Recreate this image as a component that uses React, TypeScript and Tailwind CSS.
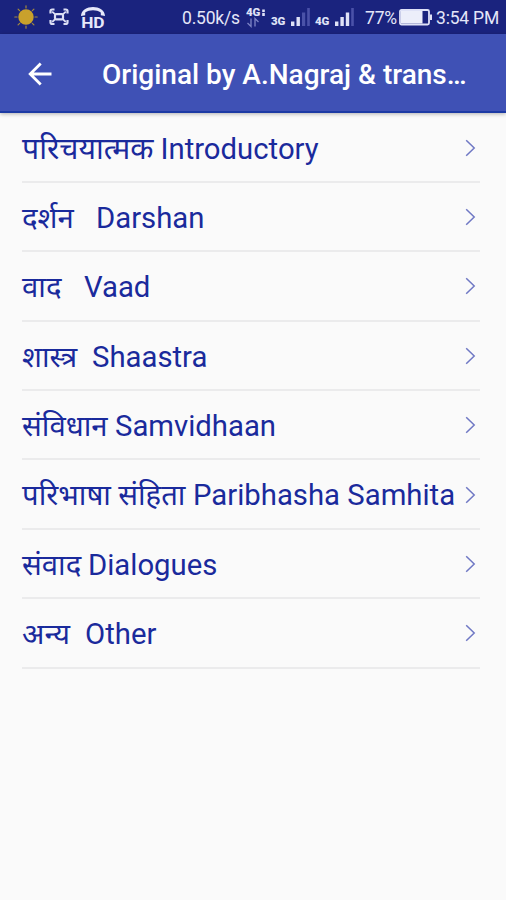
import React from 'react';

interface Topic {
  hindi: string;
  english: string;
  // size of the Hindi part, its width includes the gap after it
  hindiClass: string;
}

const topics: Topic[] = [
  { hindi: 'परिचयात्मक', english: 'Introductory', hindiClass: 'w-[138.5px] text-[30.2px]' },
  { hindi: 'दर्शन', english: 'Darshan', hindiClass: 'w-[74px]' },
  { hindi: 'वाद', english: 'Vaad', hindiClass: 'w-[62px]' },
  { hindi: 'शास्त्र', english: 'Shaastra', hindiClass: 'w-[70px]' },
  { hindi: 'संविधान', english: 'Samvidhaan', hindiClass: 'w-[93px]' },
  { hindi: 'परिभाषा संहिता', english: 'Paribhasha Samhita', hindiClass: 'w-[171px]' },
  { hindi: 'संवाद', english: 'Dialogues', hindiClass: 'w-[66px]' },
  { hindi: 'अन्य', english: 'Other', hindiClass: 'w-[63px]' },
];

const SunIcon = () => (
  <svg width="26" height="26" viewBox="0 0 26 26" className="shrink-0">
    <g stroke="#a3893f" strokeWidth="1.2" strokeLinecap="round">
      {[0, 45, 90, 135, 180, 225, 270, 315].map((angle) => (
        <line key={angle} x1="13" y1="1.8" x2="13" y2="4" transform={`rotate(${angle} 13 13)`} />
      ))}
    </g>
    <circle cx="13" cy="13" r="7.7" fill="#c9a12c" />
  </svg>
);

const ScanIcon = () => (
  <svg width="20" height="18" viewBox="0 0 20 18" fill="none" stroke="#dcdff5" strokeWidth="2.2" className="shrink-0">
    <path d="M1.5 5.5V3.2Q1.5 1.5 3.2 1.5H5.5M14.5 1.5H16.8Q18.5 1.5 18.5 3.2V5.5M18.5 12V14.3Q18.5 16 16.8 16H14.5M5.5 16H3.2Q1.5 16 1.5 14.3V12" />
    <rect x="6" y="6.2" width="8" height="5.2" rx="1.2" />
    <path d="M3.2 3.6L6.2 6.4M16.8 3.6L13.8 6.4M3.2 14L6.2 11.2M16.8 14L13.8 11.2" strokeWidth="1.8" />
  </svg>
);

const HdCallIcon = () => (
  <svg width="26" height="28" viewBox="0 0 26 28" className="shrink-0">
    <path d="M1 13C1.4 0.9 24.6 0.9 25 13L20.8 12.2V9.4C16.5 6.4 9.5 6.4 5.2 9.4V12.2Z" fill="#e6e8fa" />
    <text x="1.2" y="25" fontSize="15.5" fontWeight="700" fill="#e6e8fa" textLength="23" lengthAdjust="spacingAndGlyphs">
      HD
    </text>
  </svg>
);

const MobileSignals = () => (
  <svg width="112" height="34" viewBox="0 0 112 34" fill="#dfe2f7" fontWeight="900" className="shrink-0">
    <text x="0" y="16.2" fontSize="10.5" textLength="14" lengthAdjust="spacingAndGlyphs">4G</text>
    <rect x="16.2" y="9.5" width="2.6" height="2.6" />
    <rect x="16.2" y="13" width="2.6" height="3" />
    <path d="M5 18.5V26.5L1.5 23M9 26.5V18.5L12.5 22" fill="none" stroke="#7d84c6" strokeWidth="1.3" />
    <text x="25" y="24.8" fontSize="10" textLength="14" lengthAdjust="spacingAndGlyphs">3G</text>
    <rect x="45" y="21.5" width="3.4" height="4.5" />
    <rect x="50.5" y="17" width="3.4" height="9" />
    <rect x="56" y="12.5" width="3.2" height="13.5" fill="#4a52a8" />
    <rect x="61.2" y="8" width="2.6" height="18" fill="#4a52a8" />
    <text x="69" y="24.8" fontSize="10" textLength="14" lengthAdjust="spacingAndGlyphs">4G</text>
    <rect x="89" y="21.5" width="3.4" height="4.5" />
    <rect x="94.4" y="17" width="3.4" height="9" />
    <rect x="99.8" y="12.5" width="3.4" height="13.5" />
    <rect x="105.2" y="8" width="2.6" height="18" fill="#4a52a8" />
  </svg>
);

const BatteryIcon = () => (
  <svg width="34" height="17" viewBox="0 0 34 17" className="shrink-0">
    <rect x="1" y="1" width="29" height="14.5" rx="1.5" fill="none" stroke="#dfe2f7" strokeWidth="1.8" />
    <rect x="2" y="2" width="21.5" height="12.5" fill="#eceefa" />
    <rect x="31" y="5.5" width="2" height="5.5" fill="#dfe2f7" />
  </svg>
);

const StatusBar = () => (
  <div className="flex h-[34px] shrink-0 items-center bg-[#1a237e] text-[17.5px] leading-none tracking-[-0.2px] text-[#e4e6f8]">
    <div className="flex w-[182px] shrink-0 items-center pl-[13px]">
      <SunIcon />
      <div className="ml-[10px] flex">
        <ScanIcon />
      </div>
      <div className="ml-[11px] flex">
        <HdCallIcon />
      </div>
    </div>
    <span className="w-[64px] shrink-0 whitespace-nowrap pt-[4px]">0.50k/s</span>
    <MobileSignals />
    <span className="ml-[7px] w-[34px] shrink-0 whitespace-nowrap pt-[4px]">77%</span>
    <BatteryIcon />
    <span className="ml-[3px] shrink-0 whitespace-nowrap pt-[4px]">3:54 PM</span>
  </div>
);

const AppBar = () => (
  <header className="z-10 flex h-[79px] shrink-0 items-center border-b-2 border-[#1c3aa4] bg-[#3f51b5] text-white shadow-[0_1px_4px_rgba(0,0,0,0.3)]">
    <button className="ml-[28px] mt-[2px] flex shrink-0" aria-label="Back">
      <svg width="24" height="24" viewBox="0 0 24 24" fill="none" stroke="currentColor" strokeWidth="2.8">
        <path d="M23.5 12H2.6M12.7 1.5L2.2 12L12.7 22.5" />
      </svg>
    </button>
    <h1 className="ml-[50px] mt-[4px] whitespace-nowrap text-[28px] font-medium leading-none">Original by A.Nagraj &amp; trans…</h1>
  </header>
);

const TopicRow = ({ hindi, english, hindiClass }: Topic) => (
  <li className="flex h-[69.4px] items-center border-b-2 border-[#ebebec] text-[29.3px] leading-none text-[#1a2a9c]">
    <div className="flex items-baseline pt-[4px]">
      <span className={`${hindiClass} shrink-0 whitespace-nowrap`}>{hindi}</span>
      <span className="whitespace-nowrap">{english}</span>
    </div>
    <svg width="11" height="18" viewBox="0 0 11 18" fill="none" stroke="#6f78c4" strokeWidth="1.5" className="ml-auto mr-[4px] mt-px shrink-0">
      <path d="M1.2 1.2L9.2 9L1.2 16.8" />
    </svg>
  </li>
);

export default function App() {
  return (
    <div className="flex h-[900px] w-[506px] flex-col overflow-hidden bg-[#fafafa] font-[Roboto,'Noto_Sans','Noto_Sans_Devanagari',sans-serif]">
      <StatusBar />
      <AppBar />
      <ul className="ml-[22px] mr-[26px] pt-[0.4px]">
        {topics.map((topic) => (
          <TopicRow key={topic.english} {...topic} />
        ))}
      </ul>
    </div>
  );
}
